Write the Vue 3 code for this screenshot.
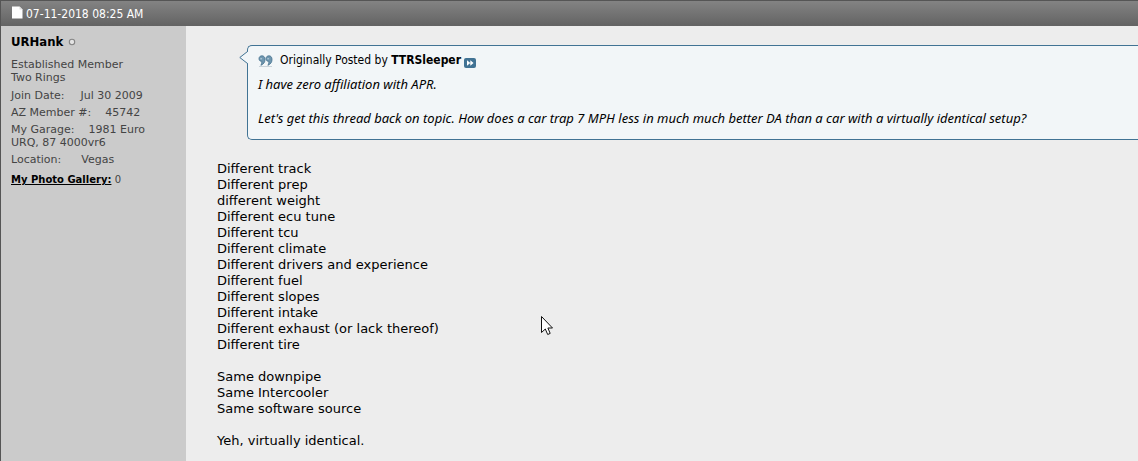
<script setup>
const facts = [
  { label: 'Join Date:', lines: ['Jul 30 2009'], gap: 'wide' },
  { label: 'AZ Member #:', lines: ['45742'], gap: 'mid' },
  { label: 'My Garage:', lines: ['1981 Euro', 'URQ, 87 4000vr6'], gap: 'mid' },
  { label: 'Location:', lines: ['Vegas'], gap: 'wider' },
]
const paragraphs = [
  [
    'Different track',
    'Different prep',
    'different weight',
    'Different ecu tune',
    'Different tcu',
    'Different climate',
    'Different drivers and experience',
    'Different fuel',
    'Different slopes',
    'Different intake',
    'Different exhaust (or lack thereof)',
    'Different tire',
  ],
  ['Same downpipe', 'Same Intercooler', 'Same software source'],
  ['Yeh, virtually identical.'],
]
</script>

<template>
  <article class="post">
    <header class="post-head">
      <svg class="page-icon" width="11" height="13" viewBox="0 0 11 13" aria-hidden="true">
        <path d="M0 0.500h7.500l3 3v9h-10.500z" fill="#fff" />
        <path d="M7.500 0.500v3h3" fill="#ddd" />
      </svg>
      <time datetime="2018-07-11T08:25">07-11-2018 08:25 AM</time>
    </header>

    <div class="post-main">
      <aside class="user">
        <div class="name-row">
          <a class="user-name" href="#">URHank</a>
          <svg width="8" height="8" viewBox="0 0 8 8" role="img" aria-label="Offline">
            <circle cx="4" cy="4" r="2.7" fill="#e4e4e4" stroke="#858585" stroke-width="1.1" />
          </svg>
        </div>
        <div class="rank">Established Member<br />Two Rings</div>
        <dl class="facts">
          <div v-for="fact in facts" :key="fact.label" class="fact">
            <dt :class="fact.gap">{{ fact.label }}</dt>
            <dd v-for="line in fact.lines" :key="line">{{ line }}</dd>
          </div>
        </dl>
        <div class="gallery"><a href="#">My Photo Gallery:</a> 0</div>
      </aside>

      <section class="content">
        <blockquote class="quote">
          <svg class="pointer" width="9" height="15" viewBox="0 0 9 15" aria-hidden="true">
            <path d="M9 1.5 L0.8 7.5 L9 13.5z" fill="#f2f6f8" />
            <path d="M8.5 1.5 L0.8 7.5 L8.5 13.5" fill="none" stroke="#417394" />
          </svg>
          <div class="quote-head">
            <svg class="marks" width="15" height="12" viewBox="0 0 15 12" aria-hidden="true">
              <path d="M1 11.500h13" stroke="#c9d3da" />
              <g fill="#6f97b0" stroke="#44708d" stroke-width=".8">
                <path d="M4 .8C2.200 .8 1 2 1 3.700C1 5.400 2.200 6.400 3.800 6.300C4 7.600 3.600 8.900 2.900 10.300C5.600 9.300 7.200 7 7 4.200C6.900 2.100 5.800 .8 4 .8z" />
                <path d="M11 .8C9.200 .8 8 2 8 3.700C8 5.400 9.200 6.400 10.800 6.300C11 7.600 10.600 8.900 9.900 10.300C12.600 9.300 14.200 7 14 4.200C13.900 2.100 12.800 .8 11 .8z" />
              </g>
              <path d="M2.300 3.800h1.800M9.300 3.800h1.800" stroke="#c3d6e1" />
            </svg>
            <span>Originally Posted by <b>TTRSleeper</b></span>
            <a class="view" href="#" aria-label="View Post">
              <svg width="12" height="10" viewBox="0 0 12 10" aria-hidden="true">
                <rect width="12" height="10" rx="2" fill="#417394" />
                <path d="M3 2.300l3.300 2.700L3 7.700zM6.300 2.300L9.600 5L6.300 7.700z" fill="#fff" />
              </svg>
            </a>
          </div>
          <p>I have zero affiliation with APR.</p>
          <p>Let's get this thread back on topic. How does a car trap 7 MPH less in much much better DA than a car with a virtually identical setup?</p>
        </blockquote>

        <div class="message">
          <p v-for="(lines, i) in paragraphs" :key="i">
            <template v-for="line in lines" :key="line">{{ line }}<br /></template>
          </p>
        </div>
      </section>
    </div>

    <svg class="cursor" width="12" height="20" viewBox="0 0 12 20" aria-hidden="true">
      <path d="M0.500 0.500V16.500L4.300 13L6.700 18.500L9.200 17.400L6.900 12H11.500z" fill="#fff" stroke="#111" />
    </svg>
  </article>
</template>

<style>
body {
  background: #ededed;
}
</style>

<style scoped>
.post {
  position: relative;
  display: flex;
  flex-direction: column;
  box-sizing: border-box;
  min-height: 100vh;
  border-top: 1px solid #555;
  border-left: 1px solid #555;
  background: #ededed;
  color: #000;
  font-family: Verdana, "DejaVu Sans", sans-serif;
  font-size: 13px;
  line-height: 16px;
  overflow: hidden;
}
.post-head {
  display: flex;
  align-items: center;
  gap: 3px;
  height: 25px;
  padding-left: 11px;
  background: linear-gradient(#838383, #636363);
  color: #fff;
  font-family: Tahoma, "DejaVu Sans Condensed", sans-serif;
  font-size: 12px;
}
.page-icon {
  margin-bottom: 2px;
}
.post-main {
  display: flex;
  flex: 1;
}
.user {
  flex: none;
  box-sizing: border-box;
  width: 185px;
  padding: 8px 30px 0 10px;
  background: #cbcbcb;
  color: #444;
  font-size: 11px;
  line-height: 13px;
}
.name-row {
  display: flex;
  align-items: center;
  gap: 5px;
  line-height: 16px;
}
.user-name {
  color: #000;
  font-family: Tahoma, "DejaVu Sans Condensed", sans-serif;
  font-size: 13px;
  font-weight: bold;
  text-decoration: none;
}
.rank {
  margin-top: 8px;
}
.facts {
  margin: 5px 0 0;
}
.fact {
  margin-bottom: 4px;
}
.fact dt,
.fact dd {
  display: inline-block;
  margin: 0;
}
.fact .mid {
  margin-right: 14px;
}
.fact .wide {
  margin-right: 16px;
}
.fact .wider {
  margin-right: 20px;
}
.gallery {
  margin-top: 7px;
  font-size: 10px;
}
.gallery a {
  color: #000;
  font-weight: bold;
}
.content {
  flex: 1;
  min-width: 0;
  padding: 19px 0 0 31px;
}
.quote {
  position: relative;
  margin: 0 0 21px 30px;
  padding: 6px 10px 12px;
  border: 1px solid #417394;
  border-right: 0;
  border-radius: 5px 0 0 5px;
  background: #f2f6f8;
  font-family: Tahoma, "DejaVu Sans Condensed", sans-serif;
  font-size: 12px;
  line-height: 17px;
}
.pointer {
  position: absolute;
  top: 4px;
  left: -9px;
}
.quote-head {
  display: flex;
  align-items: center;
  margin-bottom: 7px;
}
.marks {
  margin-right: 7px;
}
.view {
  display: flex;
  margin: 4px 0 0 3px;
}
.quote p {
  margin: 0;
  font-family: Tahoma, "Noto Sans", sans-serif;
  font-size: 13px;
  font-style: italic;
}
.quote p + p {
  margin-top: 17px;
}
.message p {
  margin: 0 0 16px;
}
.cursor {
  position: absolute;
  top: 315px;
  left: 540px;
}
</style>
